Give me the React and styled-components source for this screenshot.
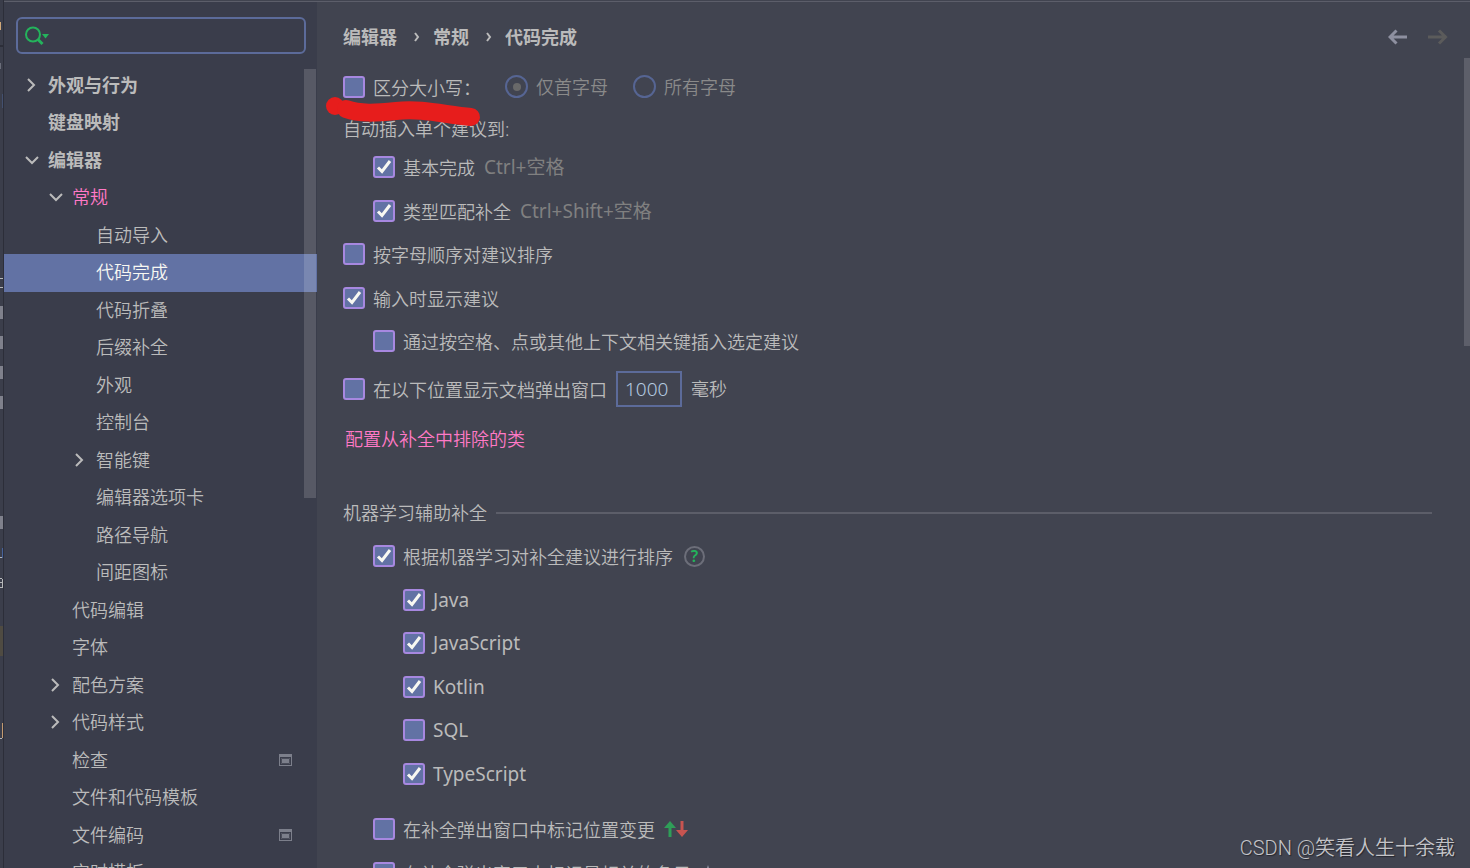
import React, { useState } from 'react';
import styled, { createGlobalStyle, css } from 'styled-components';

const GlobalStyle = createGlobalStyle`
  *, *::before, *::after { box-sizing: border-box; }
  body {
    margin: 0;
    background: #414450;
    color: #bbbbbb;
    font: 350 18px/24px 'Noto Sans', 'Noto Sans CJK SC', sans-serif;
  }
  button, input { font: inherit; color: inherit; }
`;

const Window = styled.div`
  display: flex;
  height: 100vh;
  overflow: hidden;
`;

const EditorEdge = styled.div`
  flex: 0 0 4px;
  overflow: hidden;
  border-right: 1px solid #2c2e39;
  background: #3b3e4b;
`;

const Dialog = styled.div`
  flex: 1;
  min-width: 0;
  display: flex;
  margin-top: 1px;
  border-top: 1px solid #5c5e6a;
`;

const Sidebar = styled.aside`
  position: relative;
  flex: 0 0 313px;
  overflow: hidden;
  background: #3a3d4b;
`;

const SearchBox = styled.label`
  display: flex;
  align-items: center;
  height: 37px;
  margin: 15px 11px 13px 12px;
  padding-left: 7px;
  border: 2px solid #5c6b9a;
  border-radius: 6px;
`;

const SearchInput = styled.input`
  flex: 1;
  min-width: 0;
  padding: 0 8px;
  border: 0;
  outline: 0;
  background: none;
`;

const Tree = styled.ul`
  margin: 0;
  padding: 0;
  list-style: none;
`;

const TreeItem = styled.li`
  display: flex;
  height: 37px;
  &:nth-child(even) { height: 38px; }
`;

const TreeButton = styled.button`
  flex: 1;
  display: flex;
  align-items: center;
  padding: 0 25px 2px ${(p) => 20 + p.$level * 24}px;
  border: 0;
  text-align: left;
  white-space: nowrap;
  background: ${(p) => (p.$selected ? '#6272a4' : 'none')};
  color: ${(p) => (p.$selected ? '#f8f8f2' : p.$active ? '#ff79c6' : '#bbbbbb')};
  font-weight: ${(p) => (p.$strong ? 700 : 350)};
`;

const ChevronSlot = styled.span`
  display: flex;
  width: 24px;
  color: #bbbbbb;
`;

const TreeLabel = styled.span`
  flex: 1;
`;

const Scrollbar = styled.div`
  position: absolute;
  right: ${(p) => p.$right}px;
  top: ${(p) => p.$top}px;
  width: ${(p) => p.$width}px;
  height: ${(p) => p.$height}px;
  background: rgba(255, 255, 255, 0.15);
`;

const Main = styled.main`
  position: relative;
  flex: 1;
  min-width: 0;
  overflow: hidden;
  padding: 0 38px 0 26px;
  background: #414450;
`;

const Header = styled.header`
  display: flex;
  align-items: center;
  justify-content: space-between;
  height: 63px;
  padding-top: 6px;
`;

const Breadcrumbs = styled.nav`
  display: flex;
  align-items: center;
  font-weight: 700;
`;

const Crumb = styled.a`
  color: inherit;
  text-decoration: none;
`;

const CrumbMark = styled.svg`
  margin: 0 13px 0 17px;
`;

const History = styled.div`
  display: flex;
  gap: 20px;
  margin-right: -16px;
`;

const IconButton = styled.button`
  display: flex;
  padding: 0;
  border: 0;
  background: none;
  color: ${(p) => (p.disabled ? '#5b5b5b' : '#8e90a0')};
`;

const rowBase = css`
  display: flex;
  align-items: center;
  white-space: nowrap;
`;

const Rows = styled.div`
  margin-top: ${(p) => p.$gap || 0}px;
`;

const Row = styled.div`
  ${rowBase}
  height: 44px;
  padding-left: ${(p) => (p.$indent || 0) * 30}px;
  &:nth-child(even) { height: 43px; }
`;

const DelayRow = styled.div`
  ${rowBase}
  height: 52px;
`;

const Intro = styled.p`
  ${rowBase}
  height: 37px;
  margin: 0;
  padding-top: 4px;
`;

const LinkRow = styled.div`
  ${rowBase}
  height: 46px;
  padding: 2px 0 0 2px;
`;

const Link = styled.a`
  color: #ff79c6;
  text-decoration: none;
`;

const CheckLabel = styled.label`
  display: flex;
  align-items: center;
  gap: 8px;
`;

const CheckText = styled.span`
  ${(p) => (p.$latin ? 'font-size: 19px; font-weight: 400;' : 'padding-top: 2px;')}
`;

const CheckFrame = styled.span`
  display: grid;
  width: 22px;
  height: 22px;
  > * { grid-area: 1 / 1; }
  > svg { place-self: center; pointer-events: none; }
`;

const CheckInput = styled.input`
  appearance: none;
  width: 22px;
  height: 22px;
  margin: 0;
  border: 2px solid #a788e0;
  border-radius: 3px;
  background: #6272a4;
`;

const RadioLabel = styled.label`
  display: flex;
  align-items: center;
  gap: 8px;
  color: #8a8a8a;
`;

const RadioInput = styled.input`
  appearance: none;
  display: grid;
  place-items: center;
  width: 23px;
  height: 23px;
  margin: 0;
  border: 2px solid #566593;
  border-radius: 50%;
  &:checked::before {
    content: '';
    width: 8px;
    height: 8px;
    border-radius: 50%;
    background: #696969;
  }
`;

const RadioGroup = styled.div`
  display: flex;
  gap: 25px;
  margin-left: 24px;
`;

const Shortcut = styled.span`
  margin-left: 9px;
  color: #808080;
  font-size: 19px;
  font-weight: 400;
`;

const NumberInput = styled.input`
  width: 66px;
  height: 36px;
  margin: 0 9px;
  padding: 0 7px;
  border: 2px solid #5c6b9a;
  outline: 0;
  background: none;
  color: #b4cbe0;
  font-size: 19px;
`;

const SectionTitle = styled.h2`
  ${rowBase}
  gap: 9px;
  height: 44px;
  margin: 29px 0 0;
  padding-top: 2px;
  font-size: 18px;
  font-weight: 350;
  &::after {
    content: '';
    flex: 1;
    height: 2px;
    background: #5c5e69;
  }
`;

const HelpButton = styled.button`
  display: flex;
  align-items: center;
  justify-content: center;
  width: 21px;
  height: 21px;
  margin-left: 11px;
  padding: 0;
  border: 2px solid #6c6e79;
  border-radius: 50%;
  background: none;
  color: #24b35c;
  font-size: 16px;
  font-weight: 600;
  line-height: 16px;
`;

const RowIcon = styled.svg`
  margin-left: 9px;
`;

const Marker = styled.svg`
  position: absolute;
  left: 9px;
  top: 94px;
  pointer-events: none;
`;

const Watermark = styled.div`
  position: absolute;
  right: 15px;
  bottom: 7px;
  color: #c4c4c8;
  font: 350 20px/26px Roboto, 'Noto Sans CJK SC', sans-serif;
  text-shadow: 1px 1px 1px #26272e;
`;

function Chevron({ open }) {
  return (
    <svg width="24" height="24" viewBox="0 0 24 24" fill="none" stroke="currentColor" strokeWidth="2">
      <path d={open ? 'M2 9l6 6 6-6' : 'M4 6l6 6-6 6'} />
    </svg>
  );
}

function ProjectIcon() {
  return (
    <svg width="13" height="12" viewBox="0 0 13 12">
      <path d="M0 0h13v12H0z" fill="#7c7f8b" />
      <path d="M1 3h11v8H1z" fill="#3a3d4b" />
      <path d="M2 4h9v6H2z" fill="#7c7f8b" />
      <path d="M2.5 4.500h8v5h-8z" fill="none" stroke="#4a4d5a" />
    </svg>
  );
}

function Check({ label, defaultChecked, latin }) {
  const [on, setOn] = useState(!!defaultChecked);
  return (
    <CheckLabel>
      <CheckFrame>
        <CheckInput type="checkbox" checked={on} onChange={() => setOn(!on)} />
        {on && (
          <svg width="22" height="22" viewBox="0 0 22 22" fill="none" stroke="#f8f8f2" strokeWidth="3">
            <path d="M5 11.500l4 4 8-10.500" />
          </svg>
        )}
      </CheckFrame>
      <CheckText $latin={latin}>{label}</CheckText>
    </CheckLabel>
  );
}

const TREE = [
  { label: '外观与行为', level: 0, strong: true, open: false },
  { label: '键盘映射', level: 0, strong: true },
  { label: '编辑器', level: 0, strong: true, open: true },
  { label: '常规', level: 1, open: true, active: true },
  { label: '自动导入', level: 2 },
  { label: '代码完成', level: 2, selected: true },
  { label: '代码折叠', level: 2 },
  { label: '后缀补全', level: 2 },
  { label: '外观', level: 2 },
  { label: '控制台', level: 2 },
  { label: '智能键', level: 2, open: false },
  { label: '编辑器选项卡', level: 2 },
  { label: '路径导航', level: 2 },
  { label: '间距图标', level: 2 },
  { label: '代码编辑', level: 1 },
  { label: '字体', level: 1 },
  { label: '配色方案', level: 1, open: false },
  { label: '代码样式', level: 1, open: false },
  { label: '检查', level: 1, project: true },
  { label: '文件和代码模板', level: 1 },
  { label: '文件编码', level: 1, project: true },
  { label: '实时模板', level: 1 },
];

const LANGUAGES = [
  ['Java', true],
  ['JavaScript', true],
  ['Kotlin', true],
  ['SQL', false],
  ['TypeScript', true],
];

export default function App() {
  return (
    <>
      <GlobalStyle />
      <Window>
        <EditorEdge aria-hidden="true">
          <svg width="3" height="868" viewBox="0 0 3 868">
            <path d="M0 0h3v46H0z" fill="#3a3d4a" />
            <path d="M0 22h1v8H0z" fill="#d0a878" />
            <path d="M0 45h3v2H0z" fill="#2c2e39" />
            <path d="M0 63h1v6H0z" fill="#6b6e7a" />
            <path d="M2 94h1v14H2z" fill="#43506f" />
            <path d="M0 306h3v13H0zM0 336h3v13H0zM0 366h3v13H0zM0 396h3v13H0zM0 516h3v13H0z" fill="#7f818c" />
            <path d="M2 548h1v10H2z" fill="#47639b" />
            <path d="M0 626h3v30H0z" fill="#4f4b42" />
            <path d="M0 278.500h3M0 287.500h3M0 557.500h2M0 578.500h2M2.500 579v9M0 582.500h3M0 587.500h2M0 738.500h2" fill="none" stroke="#b5b7b9" />
            <path d="M2.500 723v15" fill="none" stroke="#c39a70" />
          </svg>
        </EditorEdge>
        <Dialog>
          <Sidebar>
            <SearchBox>
              <svg width="25" height="20" viewBox="0 0 25 20" fill="none" stroke="#24b35c" strokeWidth="2">
                <circle cx="8" cy="8.500" r="7" />
                <path d="M13 13.500l4.500 4.500" strokeWidth="3" />
                <path d="M17 8h7l-3.500 4.500z" fill="#24b35c" stroke="none" />
              </svg>
              <SearchInput type="text" aria-label="搜索" />
            </SearchBox>
            <Tree>
              {TREE.map((item) => (
                <TreeItem key={item.label}>
                  <TreeButton
                    type="button"
                    $level={item.level}
                    $selected={item.selected}
                    $active={item.active}
                    $strong={item.strong}
                  >
                    <ChevronSlot>{item.open !== undefined && <Chevron open={item.open} />}</ChevronSlot>
                    <TreeLabel>{item.label}</TreeLabel>
                    {item.project && <ProjectIcon />}
                  </TreeButton>
                </TreeItem>
              ))}
            </Tree>
            <Scrollbar $right={1} $top={67} $width={12} $height={429} />
          </Sidebar>
          <Main>
            <Header>
              <Breadcrumbs>
                <Crumb href="#editor">编辑器</Crumb>
                <CrumbMark width="6" height="12" viewBox="0 0 6 12" fill="none" stroke="#bbbbbb" strokeWidth="2">
                  <path d="M1 2l3 4-3 4" />
                </CrumbMark>
                <Crumb href="#general">常规</Crumb>
                <CrumbMark width="6" height="12" viewBox="0 0 6 12" fill="none" stroke="#bbbbbb" strokeWidth="2">
                  <path d="M1 2l3 4-3 4" />
                </CrumbMark>
                <Crumb href="#completion">代码完成</Crumb>
              </Breadcrumbs>
              <History>
                <IconButton type="button" aria-label="后退">
                  <svg width="20" height="16" viewBox="0 0 20 16" fill="none" stroke="currentColor" strokeWidth="3">
                    <path d="M2 8h17M8.500 1.500L2 8l6.500 6.500" />
                  </svg>
                </IconButton>
                <IconButton type="button" aria-label="前进" disabled>
                  <svg width="20" height="16" viewBox="0 0 20 16" fill="none" stroke="currentColor" strokeWidth="3">
                    <path d="M0 8h18M11 1.500L17.500 8 11 14.500" />
                  </svg>
                </IconButton>
              </History>
            </Header>

            <Row>
              <Check label="区分大小写：" />
              <RadioGroup>
                <RadioLabel>
                  <RadioInput type="radio" name="case" defaultChecked disabled />
                  仅首字母
                </RadioLabel>
                <RadioLabel>
                  <RadioInput type="radio" name="case" disabled />
                  所有字母
                </RadioLabel>
              </RadioGroup>
            </Row>
            <Intro>自动插入单个建议到:</Intro>
            <Rows>
              <Row $indent={1}>
                <Check label="基本完成" defaultChecked />
                <Shortcut>Ctrl+空格</Shortcut>
              </Row>
              <Row $indent={1}>
                <Check label="类型匹配补全" defaultChecked />
                <Shortcut>Ctrl+Shift+空格</Shortcut>
              </Row>
              <Row>
                <Check label="按字母顺序对建议排序" />
              </Row>
              <Row>
                <Check label="输入时显示建议" defaultChecked />
              </Row>
              <Row $indent={1}>
                <Check label="通过按空格、点或其他上下文相关键插入选定建议" />
              </Row>
            </Rows>
            <DelayRow>
              <Check label="在以下位置显示文档弹出窗口" />
              <NumberInput type="text" defaultValue="1000" aria-label="毫秒" />
              毫秒
            </DelayRow>
            <LinkRow>
              <Link href="#excluded">配置从补全中排除的类</Link>
            </LinkRow>

            <SectionTitle>机器学习辅助补全</SectionTitle>
            <Rows>
              <Row $indent={1}>
                <Check label="根据机器学习对补全建议进行排序" defaultChecked />
                <HelpButton type="button">?</HelpButton>
              </Row>
              {LANGUAGES.map(([name, on]) => (
                <Row key={name} $indent={2}>
                  <Check label={name} defaultChecked={on} latin />
                </Row>
              ))}
            </Rows>
            <Rows $gap={12}>
              <Row $indent={1}>
                <Check label="在补全弹出窗口中标记位置变更" />
                <RowIcon width="24" height="16" viewBox="0 0 24 16" fill="none" strokeWidth="3">
                  <path d="M6 16V4" stroke="#2f9e58" />
                  <path d="M0 7l6-7 6 7z" fill="#2f9e58" />
                  <path d="M18 0v12" stroke="#c75450" />
                  <path d="M12 9l6 7 6-7z" fill="#c75450" />
                </RowIcon>
              </Row>
              <Row $indent={1}>
                <Check label="在补全弹出窗口中标记最相关的条目" />
                <RowIcon width="16" height="16" viewBox="0 0 16 16" fill="#8e90a0">
                  <path d="M8 0l2 5.500 6 .5-4.500 4 1.500 6-5-3.500L3 16l1.500-6L0 6l6-.5z" />
                </RowIcon>
              </Row>
            </Rows>

            <Marker width="156" height="34" viewBox="0 0 156 34" fill="none" stroke="#e71d1c" strokeLinecap="round" strokeLinejoin="round">
              <path d="M9 10h0" strokeWidth="18" />
              <path d="M20 13C34 18 50 17 70 15C96 12 120 19 145 21" strokeWidth="18" />
            </Marker>
            <Scrollbar $right={0} $top={56} $width={6} $height={288} />
            <Watermark>CSDN @笑看人生十余载</Watermark>
          </Main>
        </Dialog>
      </Window>
    </>
  );
}
